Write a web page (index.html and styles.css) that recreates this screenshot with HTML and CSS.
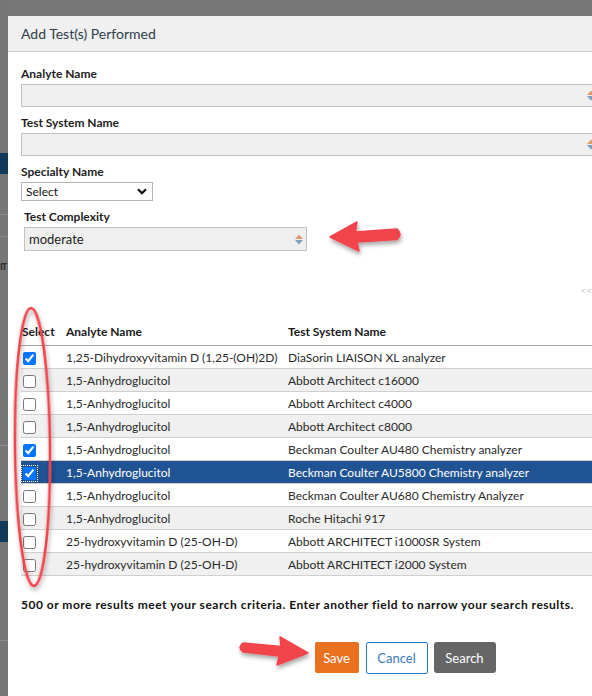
FILE: index.html
```html
<!DOCTYPE html>
<html>
<head>
<meta charset="utf-8">
<title>Add Test(s) Performed</title>
<link rel="stylesheet" href="styles.css">
</head>
<body>
<div class="page">
  <div class="behind">
    <div class="behind-gap g1"></div>
    <div class="behind-blue"></div>
    <div class="behind-gap g2"></div>
    <div class="behind-line"></div>
    <div class="behind-gap g3"></div>
    <div class="behind-line"></div>
    <div class="behind-text">rr</div>
    <div class="behind-gap g4"></div>
    <div class="behind-line"></div>
    <div class="behind-gap g5"></div>
    <div class="behind-blue"></div>
    <div class="behind-gap g6"></div>
    <div class="behind-line"></div>
  </div>

  <div class="modal">
    <div class="modal-header">
      <h1 class="modal-title">Add Test(s) Performed</h1>
    </div>
    <div class="modal-body">
      <div class="field">
        <div class="label">Analyte Name</div>
        <div class="input input-wide">
          <svg class="spin" width="8" height="11" viewBox="0 0 8 11"><polygon points="0,5 4,0.5 8,5" fill="#df9a6c"/><polygon points="0,6 8,6 4,10.5" fill="#7f9fc2"/></svg>
        </div>
      </div>
      <div class="field">
        <div class="label">Test System Name</div>
        <div class="input input-wide">
          <svg class="spin" width="8" height="11" viewBox="0 0 8 11"><polygon points="0,5 4,0.5 8,5" fill="#df9a6c"/><polygon points="0,6 8,6 4,10.5" fill="#7f9fc2"/></svg>
        </div>
      </div>
      <div class="field">
        <div class="label">Specialty Name</div>
        <div class="select">
          <span>Select</span>
          <svg class="chev" width="10" height="7" viewBox="0 0 10 7"><polyline points="1,1.2 5,5.2 9,1.2" fill="none" stroke="#111" stroke-width="2.2"/></svg>
        </div>
      </div>
      <div class="field field-indent">
        <div class="label">Test Complexity</div>
        <div class="input input-medium">
          <span class="input-text">moderate</span>
          <svg class="spin" width="8" height="11" viewBox="0 0 8 11"><polygon points="0,5 4,0.5 8,5" fill="#df9a6c"/><polygon points="0,6 8,6 4,10.5" fill="#7f9fc2"/></svg>
        </div>
      </div>

      <div class="pager">&lt;&lt;</div>

      <table class="results">
        <thead>
          <tr><th class="c-sel">Select</th><th class="c-an">Analyte Name</th><th class="c-ts">Test System Name</th></tr>
        </thead>
        <tbody>
          <tr><td class="c-sel"><input type="checkbox" checked></td><td>1,25-Dihydroxyvitamin D (1,25-(OH)2D)</td><td>DiaSorin LIAISON XL analyzer</td></tr>
          <tr><td class="c-sel"><input type="checkbox"></td><td>1,5-Anhydroglucitol</td><td>Abbott Architect c16000</td></tr>
          <tr><td class="c-sel"><input type="checkbox"></td><td>1,5-Anhydroglucitol</td><td>Abbott Architect c4000</td></tr>
          <tr><td class="c-sel"><input type="checkbox"></td><td>1,5-Anhydroglucitol</td><td>Abbott Architect c8000</td></tr>
          <tr><td class="c-sel"><input type="checkbox" checked></td><td>1,5-Anhydroglucitol</td><td>Beckman Coulter AU480 Chemistry analyzer</td></tr>
          <tr class="selected"><td class="c-sel"><input type="checkbox" class="focused" checked></td><td>1,5-Anhydroglucitol</td><td>Beckman Coulter AU5800 Chemistry analyzer</td></tr>
          <tr><td class="c-sel"><input type="checkbox"></td><td>1,5-Anhydroglucitol</td><td>Beckman Coulter AU680 Chemistry Analyzer</td></tr>
          <tr><td class="c-sel"><input type="checkbox"></td><td>1,5-Anhydroglucitol</td><td>Roche Hitachi 917</td></tr>
          <tr><td class="c-sel"><input type="checkbox"></td><td>25-hydroxyvitamin D (25-OH-D)</td><td>Abbott ARCHITECT i1000SR System</td></tr>
          <tr><td class="c-sel"><input type="checkbox"></td><td>25-hydroxyvitamin D (25-OH-D)</td><td>Abbott ARCHITECT i2000 System</td></tr>
        </tbody>
      </table>

      <p class="note">500 or more results meet your search criteria. Enter another field to narrow your search results.</p>

      <div class="actions">
        <button class="btn btn-save">Save</button>
        <button class="btn btn-cancel">Cancel</button>
        <button class="btn btn-search">Search</button>
      </div>
    </div>
  </div>

  <svg class="annotations" width="592" height="696" viewBox="0 0 592 696">
    <defs>
      <filter id="sh" x="-20%" y="-20%" width="140%" height="160%">
        <feDropShadow dx="1" dy="3" stdDeviation="2" flood-color="#000" flood-opacity="0.35"/>
      </filter>
    </defs>
    <path filter="url(#sh)" fill="#f2444b" stroke="#f2444b" stroke-width="1.5" stroke-linejoin="round"
      d="M330,237 L357,222 L355.5,232 L397,229 Q403,234 397,239.5 L357,242 L359,251 Z"/>
    <path filter="url(#sh)" fill="#f2444b" stroke="#f2444b" stroke-width="1.5" stroke-linejoin="round"
      d="M308,653 L280,637 L281,646.5 L243,643 Q237,647.5 243,652 L279,656 L277,665 Z"/>
    <ellipse filter="url(#sh)" cx="32.5" cy="447" rx="17.5" ry="139" fill="none" stroke="#f2444b" stroke-width="2.6" transform="rotate(-0.6 32.5 447)"/>
  </svg>
</div>
</body>
</html>
```
FILE: styles.css
```css
html, body {
  margin: 0;
  padding: 0;
}

body {
  background: #777777;
  font-family: "Lato", "Liberation Sans", sans-serif;
  color: #222;
  overflow: hidden;
  width: 592px;
  height: 696px;
}

.page {
  position: relative;
  display: flex;
  align-items: flex-start;
  width: 592px;
  height: 696px;
  overflow: hidden;
}

/* page behind the overlay, visible in the left strip */
.behind {
  width: 8px;
  flex-shrink: 0;
  display: flex;
  flex-direction: column;
  background: #767676;
  height: 696px;
  overflow: hidden;
}
.behind-gap.g1 { height: 153px; }
.behind-blue { height: 21px; background: #123a5a; }
.behind-gap.g2 { height: 40px; }
.behind-line { height: 1px; background: #8c8c8c; }
.behind-gap.g3 { height: 21px; }
.behind-text {
  font-family: "Liberation Sans", sans-serif;
  font-size: 12px;
  line-height: 18px;
  color: #222;
  margin-top: 20px;
  letter-spacing: -1px;
  white-space: nowrap;
}
.behind-gap.g4 { height: 170px; }
.behind-gap.g5 { height: 75px; }
.behind-gap.g6 { height: 98px; }

/* modal */
.modal {
  margin-top: 16px;
  width: 794px;
  flex-shrink: 0;
  background: #fff;
  height: 700px;
}

.modal-header {
  height: 35px;
  background: #f0f0f0;
  border-bottom: 1px solid #cacaca;
  display: flex;
  align-items: center;
  padding-left: 13px;
}

.modal-title {
  margin: 0;
  font-size: 14px;
  font-weight: 400;
  color: #2f3d4c;
}

.modal-body {
  padding: 14px 13px 0 13px;
}

.field {
  margin-bottom: 8px;
}
.field-indent {
  padding-left: 3px;
}

.label {
  font-size: 12px;
  font-weight: 700;
  line-height: 15px;
  margin-bottom: 3px;
  color: #1e1e1e;
}

.input {
  box-sizing: border-box;
  height: 23px;
  background: #efefef;
  border: 1px solid #c2c2c2;
  display: flex;
  align-items: center;
  justify-content: space-between;
  padding: 0 3px 0 4px;
}
.input-wide { width: 578px; justify-content: flex-end; }
.input-medium { width: 283px; height: 24px; }

.input-text {
  font-size: 13px;
  color: #222;
}

.spin { display: block; }

.select {
  box-sizing: border-box;
  width: 132px;
  height: 19px;
  border: 1px solid #b4b4b4;
  background: #fff;
  display: flex;
  align-items: center;
  justify-content: space-between;
  padding: 0 5px 0 4px;
  font-size: 12px;
  color: #111;
}

.chev { display: block; }

.pager {
  margin-top: 32px;
  margin-right: 197px;
  text-align: right;
  font-size: 10px;
  line-height: 14px;
  color: #c4c4c4;
}

.results {
  margin-top: 22px;
  width: 768px;
  border-collapse: collapse;
  font-size: 12px;
  color: #2a2a2a;
}

.results th {
  text-align: left;
  font-weight: 700;
  color: #1a1a1a;
  padding: 5px 0 6px 0;
  line-height: 15px;
  border-bottom: 1px solid #a8a8a8;
}

.results td {
  height: 22px;
  padding: 0;
  line-height: 15px;
  border-bottom: 1px solid #cfcfcf;
  vertical-align: middle;
}

.results .c-sel { width: 43px; padding-left: 1px; }
.results .c-an { width: 222px; }

.results td.c-sel {
  padding-left: 2px;
}

.results tbody tr:nth-child(even) td { background: #f0f0f0; }
.results tbody tr.selected td {
  background: #1f5393;
  color: #fff;
}

.results input[type="checkbox"] {
  margin: 3px 0 0 0;
  width: 13px;
  height: 13px;
  display: block;
}

.results input.focused {
  outline: 1px dotted #ffffff;
  outline-offset: 1px;
}

.note {
  margin: 21px 0 0 0;
  font-size: 12px;
  font-weight: 700;
  line-height: 15px;
  letter-spacing: 0.5px;
  color: #111;
}

.actions {
  margin-top: 30px;
  display: flex;
  justify-content: center;
  align-items: flex-start;
  gap: 7px;
}

.btn {
  box-sizing: border-box;
  font-family: "Lato", "Liberation Sans", sans-serif;
  font-size: 13px;
  height: 31px;
  border-radius: 2px;
  border: 1px solid transparent;
  padding: 0;
  cursor: pointer;
}

.btn-save {
  width: 44px;
  background: #ea711f;
  color: #fff;
}

.btn-cancel {
  width: 62px;
  height: 32px;
  background: #fff;
  border-color: #2a77c5;
  color: #3a79bd;
}

.btn-search {
  width: 62px;
  background: #666666;
  color: #fff;
  border-radius: 3px;
  margin-left: -1px;
}

.annotations {
  position: absolute;
  left: 0;
  top: 0;
  pointer-events: none;
}
```
